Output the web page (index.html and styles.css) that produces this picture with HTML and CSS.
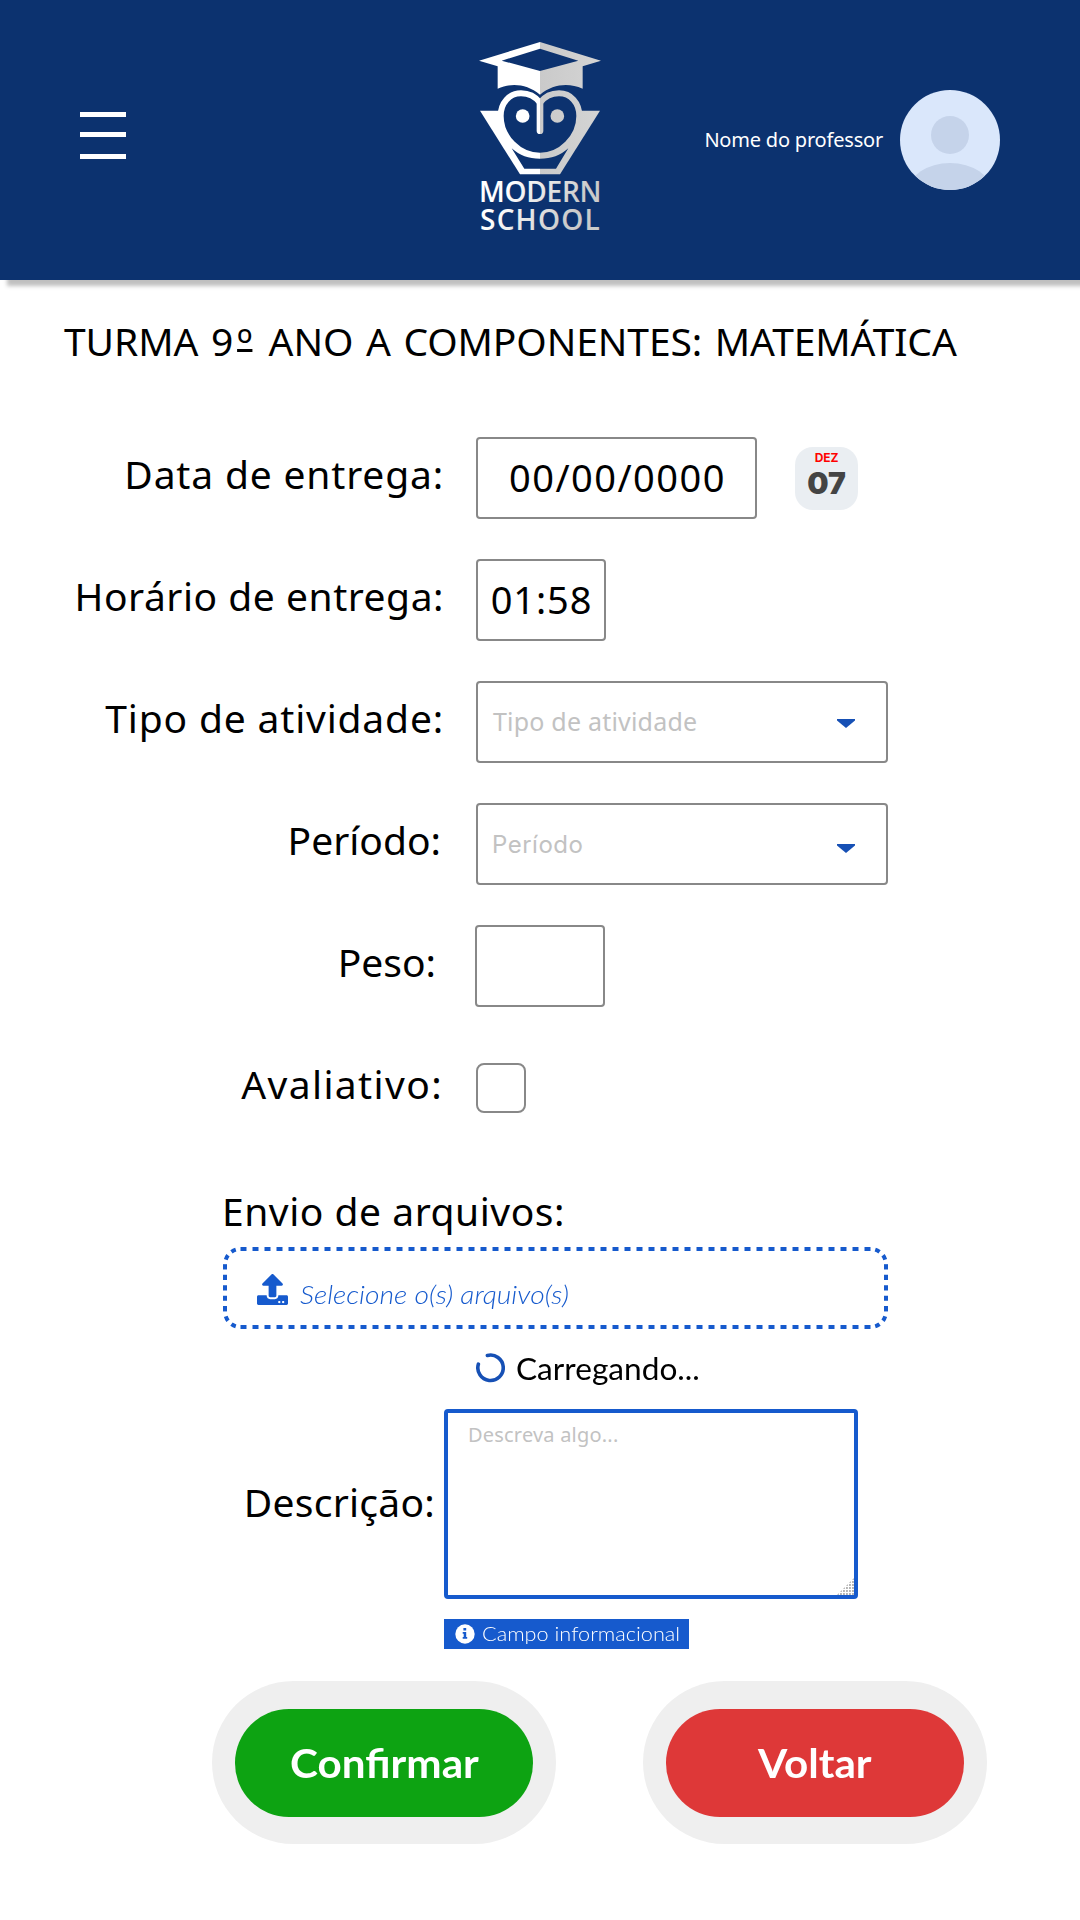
FILE: index.html
```html
<!DOCTYPE html>
<html lang="pt-BR">
<head>
<meta charset="utf-8">
<title>Modern School</title>
<link rel="stylesheet" href="styles.css">
</head>
<body>
<header class="topbar">
  <svg class="menu" width="46" height="47" viewBox="0 0 46 47" fill="#fff"><path d="M0 0h46v5H0zM0 20h46v5H0zM0 42h46v5H0z"/></svg>
  <svg class="logo" width="160" height="210" viewBox="0 0 480 630">
    <defs>
      <linearGradient id="split" gradientUnits="userSpaceOnUse" x1="60" y1="0" x2="420" y2="0">
        <stop offset="0" stop-color="#fff"/><stop offset=".5" stop-color="#fff"/>
        <stop offset=".5" stop-color="#cacaca"/><stop offset="1" stop-color="#d4d4d4"/>
      </linearGradient>
      <linearGradient id="fade" gradientUnits="userSpaceOnUse" x1="160" y1="450" x2="330" y2="560">
        <stop offset="0" stop-color="#fff"/><stop offset="1" stop-color="#cbcbcb"/>
      </linearGradient>
      <mask id="owl" maskUnits="userSpaceOnUse" x="0" y="0" width="480" height="450">
        <path fill="#fff" d="M60 242H420L300 433H180Z"/>
        <path fill="#000" stroke="#fff" stroke-width="18" d="M240 218C225 199 205 190 183 190C148 190 122 218 122 258C122 322 178 377 240 377C302 377 358 322 358 258C358 218 332 190 297 190C275 190 255 199 240 218Z"/>
        <path stroke="#fff" stroke-width="20" stroke-linecap="round" d="M240 218V302"/>
        <circle fill="#fff" cx="188" cy="258" r="20.5"/><circle fill="#fff" cx="292" cy="258" r="20.5"/>
        <path fill="#000" d="M155 355C180 377 205 386 240 386C275 386 300 377 325 355L288 416H193Z"/>
      </mask>
    </defs>
    <path fill="url(#split)" fill-rule="evenodd" d="M57 92L240 36L423 92L368 109V176C325 158 280 162 240 194C200 162 155 158 113 176V109ZM125 92L240 123L355 92L240 56Z"/>
    <rect fill="url(#split)" x="50" y="175" width="380" height="262" mask="url(#owl)"/>
    <g class="wordmark" fill="url(#fade)"><text class="word-modern" x="57" y="516">MODERN</text><text class="word-school" x="60" y="600">SCHOOL</text></g>
  </svg>
  <div class="user">
    <span class="user-name">Nome do professor</span>
    <svg width="100" height="100" viewBox="0 0 100 100">
      <clipPath id="round"><circle cx="50" cy="50" r="50"/></clipPath>
      <g clip-path="url(#round)"><path fill="#dae7fb" d="M0 0h100v100H0z"/><g fill="#c5d3ea"><circle cx="50" cy="45" r="19"/><ellipse cx="50" cy="101" rx="41.5" ry="28"/></g></g>
    </svg>
  </div>
</header>
<main>
  <h1 class="title">TURMA 9<span class="ordinal">º</span> ANO A COMPONENTES: MATEMÁTICA</h1>
  <section class="form">
    <span class="label l-data">Data de entrega:</span>
    <div class="field-row">
      <div class="box date">00/00/0000</div>
      <div class="calendar"><span class="month">DEZ</span><span class="day">07</span></div>
    </div>
    <span class="label l-hora">Horário de entrega:</span>
    <div class="box small">01:58</div>
    <span class="label l-tipo">Tipo de atividade:</span>
    <div class="box select"><span class="ph-tipo">Tipo de atividade</span><svg class="caret" width="18" height="9" viewBox="0 0 18 9"><path d="M0 0h18v1.5L9 9 0 1.5z"/></svg></div>
    <span class="label l-periodo">Período:</span>
    <div class="box select"><span class="ph-periodo">Período</span><svg class="caret caret-low" width="18" height="9" viewBox="0 0 18 9"><path d="M0 0h18v1.5L9 9 0 1.5z"/></svg></div>
    <span class="label l-peso">Peso:</span>
    <div class="box small peso"></div>
    <span class="label l-aval">Avaliativo:</span>
    <div class="check"></div>
  </section>
  <section class="files">
    <div class="files-label">Envio de arquivos:</div>
    <div class="dropzone">
      <svg class="dashes" width="665" height="82" viewBox="0 0 665 82" fill="none" stroke="#165acd" stroke-width="4">
        <path stroke-dasharray="6 6" d="M17.5 2H648M17.5 80H648"/>
        <path stroke-dasharray="5.2 5.25" d="M2 17.3V65M663 17.3V65"/>
        <path stroke-dasharray="4.8 4.8" stroke-dashoffset="4.8" d="M17.5 2A15.4 15.4 0 0 0 2 17.4M647.5 2A15.4 15.4 0 0 1 663 17.4M17.5 80A15.4 15.4 0 0 1 2 64.6M647.5 80A15.4 15.4 0 0 0 663 64.6"/>
      </svg>
      <svg class="upload" width="31" height="31" viewBox="0 0 512 512" fill="#165acd"><path d="M296 384h-80c-13.3 0-24-10.7-24-24V192h-87.7c-17.8 0-26.7-21.5-14.1-34.1L242.3 5.7c7.5-7.5 19.8-7.5 27.3 0l152.2 152.2c12.6 12.6 3.7 34.1-14.1 34.1H320v168c0 13.3-10.7 24-24 24zm216-8v112c0 13.3-10.7 24-24 24H24c-13.3 0-24-10.7-24-24V376c0-13.3 10.7-24 24-24h136v8c0 30.9 25.1 56 56 56h80c30.9 0 56-25.1 56-56v-8h136c13.3 0 24 10.7 24 24zm-124 88c0-11-9-20-20-20s-20 9-20 20 9 20 20 20 20-9 20-20zm64 0c0-11-9-20-20-20s-20 9-20 20 9 20 20 20 20-9 20-20z"/></svg>
      <span class="pick">Selecione o(s) arquivo(s)</span>
    </div>
    <div class="loading">
      <svg width="29" height="30" viewBox="0 0 29 30"><path fill="none" stroke="#1650b5" stroke-width="3.6" stroke-linecap="round" d="M11.4 2.5A12.7 12.7 0 1 1 2.4 11.1"/></svg>
      <span class="loading-text">Carregando...</span>
    </div>
  </section>
  <section class="description">
    <span class="desc-label">Descrição:</span>
    <div class="textarea"><span>Descreva algo...</span>
      <svg class="grip" width="17" height="17" viewBox="0 0 17 17"><defs><pattern id="dots" width="3" height="3" patternUnits="userSpaceOnUse"><path fill="#b5b5b5" d="M0 0h1.9v1.9H0z"/></pattern></defs><path fill="url(#dots)" d="M17 0v17H0z"/></svg>
    </div>
  </section>
  <div class="info">
    <svg width="20" height="20" viewBox="0 0 20 20"><circle cx="10" cy="10" r="9.7" fill="#fff"/><path fill="#165acd" d="M8.4 4h2.8v2.5H8.4zM7.7 8h3.5v5h1v1.7H7.7V13h1V9.7h-1z"/></svg>
    <span>Campo informacional</span>
  </div>
  <div class="actions">
    <div class="halo"><button class="btn confirm"><span>Confirmar</span></button></div>
    <div class="halo"><button class="btn back"><span>Voltar</span></button></div>
  </div>
</main>
</body>
</html>
```
FILE: styles.css
```css
* { box-sizing: border-box; }
body {
  margin: 0;
  height: 1920px;
  overflow: hidden;
  background: #fff;
  color: #000;
  font-family: "Noto Sans", sans-serif;
}
svg { display: block; flex: none; }
span { white-space: nowrap; }

/* Header */
.topbar {
  display: grid;
  grid-template-columns: 1fr 160px 1fr;
  height: 280px;
  padding: 0 80px;
  background: #0c326f;
  box-shadow: 7px 6px 4px rgba(0, 0, 0, .25);
}
.menu { margin-top: 112px; }
.logo { margin-top: 30px; }
.wordmark { font: 600 84px "Open Sans", sans-serif; }
.word-modern { letter-spacing: -.8px; }
.word-school { letter-spacing: 3.7px; }
.user {
  display: flex;
  align-items: center;
  justify-content: flex-end;
  gap: 17px;
}
.user-name { padding-bottom: 1px; color: #fff; font-size: 20px; letter-spacing: -.2px; }

.title {
  margin: 31px 0 66px 64px;
  font-size: 39px;
  font-weight: 400;
  line-height: 60px;
  letter-spacing: -.1px;
  word-spacing: 2.6px;
  white-space: nowrap;
}
.ordinal {
  margin: 0 3.5px 0 4px;
  font-size: 41px;
  line-height: 0;
  vertical-align: -3px;
  text-decoration: underline 3px;
  text-decoration-skip-ink: none;
  text-underline-offset: -10px;
}

/* Form rows */
.form {
  display: grid;
  grid-template-columns: 444px 1fr;
  grid-auto-rows: 82px;
  gap: 40px 32px;
  align-items: center;
}
.label {
  height: 82px;
  font-size: 39px;
  line-height: 74px;
  text-align: right;
}
.l-data, .l-tipo { letter-spacing: .83px; }
.l-hora { letter-spacing: .52px; }
.l-periodo { padding-right: 3px; }
.l-peso { padding-right: 8px; }
.l-aval { padding-right: 1px; letter-spacing: 1.38px; }
.field-row { display: flex; align-items: center; gap: 38px; }
.box {
  display: flex;
  align-items: center;
  height: 82px;
  border: 2px solid #888;
  border-radius: 4px;
  font-size: 38px;
}
.date { width: 281px; justify-content: center; padding: 0 0 3px 2px; letter-spacing: 1.5px; }
.small { width: 130px; justify-content: center; padding: 0 0 3px 1px; letter-spacing: .9px; }
.peso { margin-left: -1px; }
.select { width: 412px; justify-content: space-between; padding: 0 31px 0 16px; color: #c2c2c2; }
.ph-tipo { margin-left: -1px; padding-bottom: 3px; font-size: 25px; letter-spacing: .2px; }
.ph-periodo { margin-left: -2px; font: 400 24px Inter, sans-serif; letter-spacing: .5px; }
.caret { margin-top: 3px; fill: #1650b5; }
.caret-low { margin-top: 8px; }
.check { width: 50px; height: 50px; border: 2px solid #888; border-radius: 8px; }
.calendar {
  display: flex;
  flex-direction: column;
  align-items: center;
  width: 63px;
  height: 63px;
  padding-top: 4px;
  border-radius: 18px;
  background: #eaeef2;
  font-family: Inter, sans-serif;
}
.month { color: #f00; font-size: 12px; font-weight: 700; line-height: 14px; letter-spacing: -.2px; }
.day { color: #444; font-size: 30px; font-weight: 900; line-height: 37px; }

/* File upload */
.files { margin: 58px 0 0 223px; width: 665px; }
.files-label { height: 60px; margin-left: -1px; font-size: 39px; line-height: 48px; letter-spacing: .53px; }
.dropzone {
  position: relative;
  display: flex;
  align-items: center;
  gap: 12px;
  height: 82px;
  padding-left: 34px;
}
.dashes { position: absolute; inset: 0; }
.upload { margin-top: 3px; }
.pick {
  padding-top: 12px;
  color: #165acd;
  font: italic 300 24.5px Lato, sans-serif;
  transform: scaleX(1.153);
  transform-origin: left;
}
.loading { display: flex; align-items: center; gap: 11px; height: 30px; margin: 24px 0 0 253px; }
.loading-text { font: 30px/30px Lato, sans-serif; transform: scaleX(1.054); transform-origin: left; }

/* Description */
.description { display: flex; align-items: center; height: 190px; margin-top: 26px; }
.desc-label {
  width: 444px;
  padding: 0 9px 5px 0;
  font-size: 39px;
  letter-spacing: .25px;
  text-align: right;
}
.textarea {
  position: relative;
  width: 414px;
  height: 190px;
  padding: 8px 20px;
  border: 4px solid #165acd;
  border-radius: 4px;
  color: #c2c2c2;
  font-size: 20px;
  line-height: 28px;
  letter-spacing: .2px;
}
.grip { position: absolute; right: 0; bottom: 0; }
.info {
  display: flex;
  align-items: center;
  gap: 7px;
  width: 245px;
  height: 30px;
  margin: 20px 0 0 444px;
  padding-left: 11px;
  background: #165acd;
  color: #fff;
  font: 300 20px Lato, sans-serif;
}
.info span { padding-bottom: 2px; transform: scaleX(1.084); transform-origin: left; }

/* Buttons */
.actions { display: flex; gap: 87px; margin: 32px 0 0 212px; }
.halo { width: 344px; height: 163px; padding: 28px 23px; border-radius: 82px; background: #efefef; }
.btn {
  width: 298px;
  height: 108px;
  padding: 0 0 1px;
  border: 0;
  border-radius: 54px;
  color: #fff;
  font: 700 40px Lato, sans-serif;
}
.btn span { display: inline-block; transform: scaleX(1.055); }
.confirm { background: #0da312; }
.back { background: #de3838; }
```
